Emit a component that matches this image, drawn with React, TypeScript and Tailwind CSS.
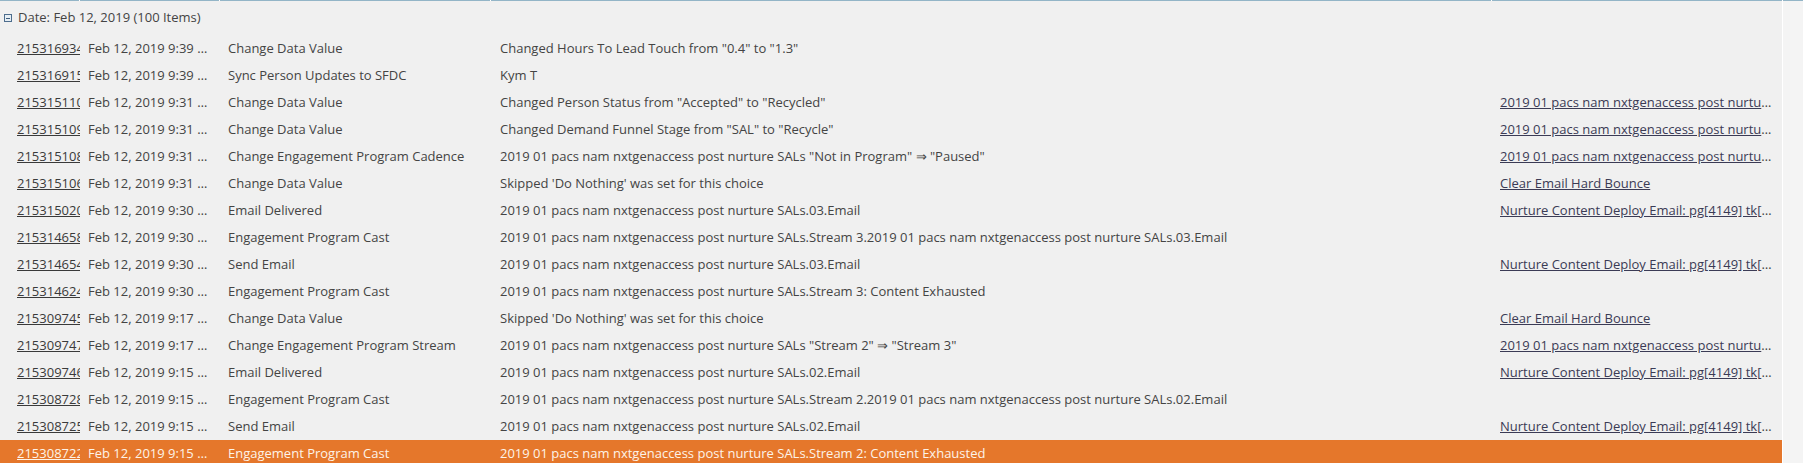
const font = { fontFamily: '"Open Sans", "Liberation Sans", sans-serif' };

type Row = {
    id: string;
    time: string;
    activity: string;
    detail: string;
    asset?: string;
};

const PROG = '2019 01 pacs nam nxtgenaccess post nurture SALs';
const NURTURE = 'Nurture Content Deploy Email: pg[4149] tk[4149] 2019 01 pacs';

const rows: Row[] = [
    { id: '215316934', time: '9:39', activity: 'Change Data Value', detail: 'Changed Hours To Lead Touch from "0.4" to "1.3"' },
    { id: '215316915', time: '9:39', activity: 'Sync Person Updates to SFDC', detail: 'Kym T' },
    { id: '215315110', time: '9:31', activity: 'Change Data Value', detail: 'Changed Person Status from "Accepted" to "Recycled"', asset: PROG },
    { id: '215315109', time: '9:31', activity: 'Change Data Value', detail: 'Changed Demand Funnel Stage from "SAL" to "Recycle"', asset: PROG },
    { id: '215315108', time: '9:31', activity: 'Change Engagement Program Cadence', detail: `${PROG} "Not in Program" ⇒ "Paused"`, asset: PROG },
    { id: '215315106', time: '9:31', activity: 'Change Data Value', detail: "Skipped 'Do Nothing' was set for this choice", asset: 'Clear Email Hard Bounce' },
    { id: '215315020', time: '9:30', activity: 'Email Delivered', detail: `${PROG}.03.Email`, asset: NURTURE },
    { id: '215314658', time: '9:30', activity: 'Engagement Program Cast', detail: `${PROG}.Stream 3.${PROG}.03.Email` },
    { id: '215314654', time: '9:30', activity: 'Send Email', detail: `${PROG}.03.Email`, asset: NURTURE },
    { id: '215314624', time: '9:30', activity: 'Engagement Program Cast', detail: `${PROG}.Stream 3: Content Exhausted` },
    { id: '215309745', time: '9:17', activity: 'Change Data Value', detail: "Skipped 'Do Nothing' was set for this choice", asset: 'Clear Email Hard Bounce' },
    { id: '215309747', time: '9:17', activity: 'Change Engagement Program Stream', detail: `${PROG} "Stream 2" ⇒ "Stream 3"`, asset: PROG },
    { id: '215309746', time: '9:15', activity: 'Email Delivered', detail: `${PROG}.02.Email`, asset: NURTURE },
    { id: '215308728', time: '9:15', activity: 'Engagement Program Cast', detail: `${PROG}.Stream 2.${PROG}.02.Email` },
    { id: '215308725', time: '9:15', activity: 'Send Email', detail: `${PROG}.02.Email`, asset: NURTURE },
    { id: '215308722', time: '9:15', activity: 'Engagement Program Cast', detail: `${PROG}.Stream 2: Content Exhausted` },
];

const ActivityRow = ({ row, selected }: { row: Row; selected: boolean }) => (
    <div
        className={`flex h-[27px] items-center text-[13px] ${
            selected ? 'bg-[#e5772b] text-[#fdf3e8]' : 'text-[#444444]'
        }`}
    >
        <div className="w-[80px] shrink-0 overflow-hidden whitespace-nowrap pl-[17px] pr-px">
            <a className={`underline ${selected ? 'text-[#fdf3e8]' : 'text-[#3a3a3a]'}`}>{row.id}</a>
        </div>
        <div className="w-[140px] shrink-0 truncate px-2">Feb 12, 2019 {row.time} AM PST</div>
        <div className="w-[271px] shrink-0 truncate px-2">{row.activity}</div>
        <div className="w-[1001px] shrink-0 truncate pl-[9px] pr-2">{row.detail}</div>
        <div className="w-[290px] shrink-0 truncate pl-2 pr-2">
            {row.asset && (
                <a className={`underline ${selected ? 'text-[#fdf3e8]' : 'text-[#3b3b55]'}`}>{row.asset}</a>
            )}
        </div>
    </div>
);

export default function App() {
    return (
        <div className="flex h-[463px] w-[1803px] overflow-hidden bg-[#f0f0f0]" style={font}>
            <div className="w-[1782px] shrink-0">
                {/* column header, scrolled out of view except its bottom edge */}
                <div className="flex h-px gap-px bg-white">
                    <div className="w-[79px] bg-[#93b5c7]" />
                    <div className="w-[139px] bg-[#93b5c7]" />
                    <div className="w-[270px] bg-[#93b5c7]" />
                    <div className="w-[1000px] bg-[#93b5c7]" />
                    <div className="flex-1 bg-[#93b5c7]" />
                </div>

                <div className="flex h-[34px] items-center gap-[6px] pl-1 text-[13px] text-[#444444]">
                    <span className="flex h-[8px] w-[8px] items-center justify-center border border-[#4d6d8d] bg-[#e6eef4]">
                        <span className="h-px w-[4px] bg-[#3d5d7d]" />
                    </span>
                    <span>Date: Feb 12, 2019 (100 Items)</span>
                </div>

                {rows.map((row, index) => (
                    <ActivityRow row={row} selected={index === rows.length - 1} key={row.id} />
                ))}
            </div>
            <div className="flex-1 border-l border-white bg-[#f4f4f4]">
                <div className="h-px bg-[#93b5c7]" />
            </div>
        </div>
    );
}
